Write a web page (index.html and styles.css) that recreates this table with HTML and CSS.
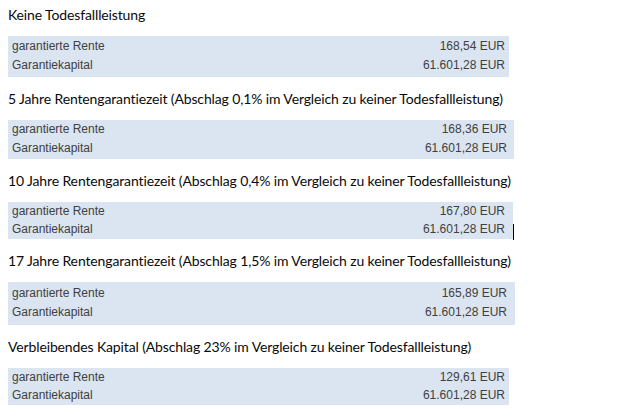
FILE: index.html
```html
<!DOCTYPE html>
<html lang="de">
<head>
<meta charset="utf-8">
<title>Todesfallleistung</title>
<link rel="stylesheet" href="styles.css">
</head>
<body>
<main class="page">
  <section class="option">
    <h2 class="title first">Keine Todesfallleistung</h2>
    <div class="box b1">
      <div class="row"><span>garantierte Rente</span><span>168,54 EUR</span></div>
      <div class="row"><span>Garantiekapital</span><span>61.601,28 EUR</span></div>
    </div>
  </section>
  <section class="option">
    <h2 class="title">5 Jahre Rentengarantiezeit (Abschlag 0,1% im Vergleich zu keiner Todesfallleistung)</h2>
    <div class="box b2">
      <div class="row"><span>garantierte Rente</span><span>168,36 EUR</span></div>
      <div class="row"><span>Garantiekapital</span><span>61.601,28 EUR</span></div>
    </div>
  </section>
  <section class="option">
    <h2 class="title">10 Jahre Rentengarantiezeit (Abschlag 0,4% im Vergleich zu keiner Todesfallleistung)</h2>
    <div class="box b3">
      <div class="row"><span>garantierte Rente</span><span>167,80 EUR</span></div>
      <div class="row"><span>Garantiekapital</span><span>61.601,28 EUR</span></div>
      <span class="cursor"></span>
    </div>
  </section>
  <section class="option">
    <h2 class="title">17 Jahre Rentengarantiezeit (Abschlag 1,5% im Vergleich zu keiner Todesfallleistung)</h2>
    <div class="box b4">
      <div class="row"><span>garantierte Rente</span><span>165,89 EUR</span></div>
      <div class="row"><span>Garantiekapital</span><span>61.601,28 EUR</span></div>
    </div>
  </section>
  <section class="option">
    <h2 class="title">Verbleibendes Kapital (Abschlag 23% im Vergleich zu keiner Todesfallleistung)</h2>
    <div class="box b5">
      <div class="row"><span>garantierte Rente</span><span>129,61 EUR</span></div>
      <div class="row"><span>Garantiekapital</span><span>61.601,28 EUR</span></div>
    </div>
  </section>
</main>
</body>
</html>
```
FILE: styles.css
```css
html, body {
  margin: 0;
  padding: 0;
  background: #ffffff;
}
.page {
  padding: 0 0 0 8px;
  display: flex;
  flex-direction: column;
}
.title {
  margin: 12px 0 11px 0;
  font-family: Lato, "Open Sans", sans-serif;
  font-weight: 400;
  font-size: 14px;
  letter-spacing: -0.13px;
  line-height: 20px;
  color: #0a0a0a;
  white-space: nowrap;
}
.title.first {
  margin-top: 5px;
}
.box {
  position: relative;
  background: #dbe5f1;
  box-sizing: border-box;
  font-family: "Liberation Sans", Arial, sans-serif;
  font-size: 12px;
  color: #404040;
  padding-left: 4px;
}
.row {
  display: flex;
  justify-content: space-between;
  height: 19px;
  line-height: 19px;
}
.b1 { width: 501px; height: 41px; padding-top: 1px; padding-right: 4px; }
.b2 { width: 506px; height: 39px; padding-top: 0; padding-right: 7px; }
.b3 { width: 505px; height: 37px; padding-top: 0; padding-right: 8px; }
.b3 .row { height: 18px; line-height: 18px; }
.b4 { width: 507px; height: 43px; padding-top: 2px; padding-right: 8px; }
.b5 { width: 501px; height: 37px; padding-top: 0; padding-right: 4px; }
.b5 .row { height: 18px; line-height: 18px; }
.cursor {
  position: absolute;
  right: -1px;
  top: 22px;
  width: 1px;
  height: 16px;
  background: #000000;
}
```
